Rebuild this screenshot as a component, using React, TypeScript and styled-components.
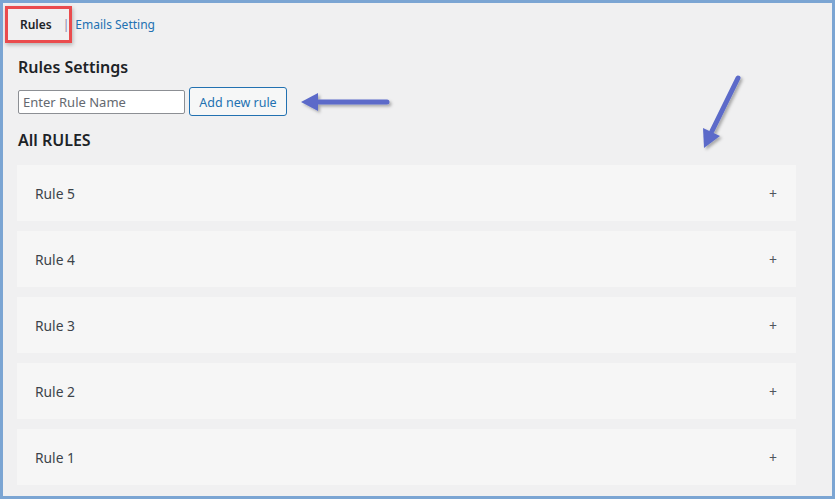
import React from 'react'
import styled, {createGlobalStyle} from 'styled-components'

const GlobalStyle = createGlobalStyle`
  html, body {
    margin: 0;
    padding: 0;
    background: #ffffff;
  }
  * {
    box-sizing: border-box;
  }
`

const Frame = styled.div`
  position: relative;
  width: 835px;
  height: 499px;
  border: 3px solid #7ba5d3;
  background: #f0f0f1;
  font-family: "Noto Sans", "Open Sans", sans-serif;
  color: #1d2327;
  overflow: hidden;
`

const Content = styled.div`
  display: flex;
  flex-direction: column;
  padding: 10px 36px 0 14px;
`

const Nav = styled.div`
  display: flex;
  align-items: center;
  height: 22px;
  font-size: 12px;
  padding-left: 3px;
`

const Tab = styled.span<{active?: boolean}>`
  color: ${p => (p.active ? '#1d2327' : '#2271b1')};
  font-weight: ${p => (p.active ? 600 : 400)};
`

const Sep = styled.span`
  color: #8a7fa8;
  margin: 0 6px 0 11px;
  position: relative;
  z-index: 2;
`

const Heading = styled.h2<{mt: number}>`
  margin: ${p => p.mt}px 0 0 1px;
  font-size: 16px;
  font-weight: 600;
  line-height: 22px;
  color: #1d2327;
`

const AddRow = styled.div`
  display: flex;
  align-items: center;
  gap: 4px;
  margin: 9px 0 0 1px;
`

const Input = styled.input`
  width: 167px;
  height: 24px;
  border: 1px solid #8c8f94;
  border-radius: 2px;
  padding: 0 4px;
  font-family: inherit;
  font-size: 13px;
  color: #2c3338;
  background: #ffffff;
  &::placeholder {
    color: #646970;
  }
`

const Button = styled.button`
  height: 29px;
  width: 98px;
  border: 1px solid #2271b1;
  border-radius: 3px;
  background: #f6f7f7;
  color: #2271b1;
  font-family: inherit;
  font-size: 12.5px;
  padding: 2px 0 0;
`

const List = styled.div`
  display: flex;
  flex-direction: column;
  gap: 10px;
  margin-top: 14px;
`

const Card = styled.div`
  display: flex;
  align-items: center;
  justify-content: space-between;
  height: 56px;
  background: #f6f6f6;
  padding: 0 19px 0 18px;
  font-size: 13.8px;
  color: #3c434a;
`

const Plus = styled.span`
  font-size: 14px;
  color: #50575e;
`

const Highlight = styled.div`
  position: absolute;
  left: 2px;
  top: 3px;
  width: 67px;
  height: 37px;
  border: 3px solid #ea4b4d;
  box-shadow: 1px 2px 4px rgba(0, 0, 0, 0.25);
  pointer-events: none;
`

const Overlay = styled.svg`
  position: absolute;
  left: -3px;
  top: -3px;
  pointer-events: none;
`

const rules = ['Rule 5', 'Rule 4', 'Rule 3', 'Rule 2', 'Rule 1']

const Arrows = () => (
  <Overlay width="835" height="499" viewBox="0 0 835 499">
    <defs>
      <filter id="shadow" x="-20%" y="-20%" width="140%" height="140%">
        <feDropShadow dx="2" dy="2" stdDeviation="1.5" floodColor="#000" floodOpacity="0.3" />
      </filter>
    </defs>
    <g filter="url(#shadow)" fill="#5b6bc9" stroke="#5b6bc9">
      <line x1="387" y1="102" x2="314" y2="102" strokeWidth="5" strokeLinecap="round" />
      <polygon points="301,102 318,93 318,111" stroke="none" />
      <line x1="738" y1="78" x2="712" y2="131" strokeWidth="5" strokeLinecap="round" />
      <polygon points="704,148 703,128 720,136" stroke="none" />
    </g>
  </Overlay>
)

export default function App() {
  return (
    <>
      <GlobalStyle />
      <Frame>
        <Content>
          <Nav>
            <Tab active>Rules</Tab>
            <Sep>|</Sep>
            <Tab>Emails Setting</Tab>
          </Nav>
          <Heading mt={21}>Rules Settings</Heading>
          <AddRow>
            <Input placeholder="Enter Rule Name" />
            <Button>Add new rule</Button>
          </AddRow>
          <Heading mt={13}>All RULES</Heading>
          <List>
            {rules.map(r => (
              <Card key={r}>
                <span>{r}</span>
                <Plus>+</Plus>
              </Card>
            ))}
          </List>
        </Content>
        <Highlight />
        <Arrows />
      </Frame>
    </>
  )
}
